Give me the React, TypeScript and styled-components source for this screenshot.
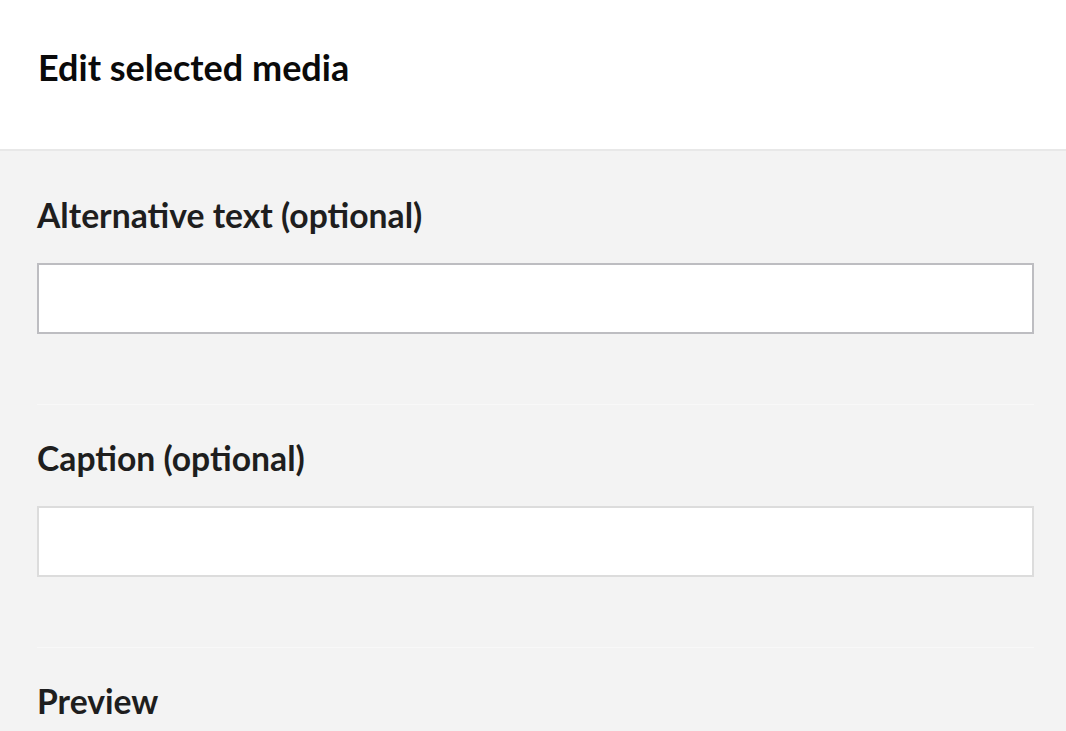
import styled, { createGlobalStyle } from 'styled-components';

const GlobalStyle = createGlobalStyle`
    html, body {
        margin: 0;
        padding: 0;
        background: #f3f3f3;
    }
    body {
        font-family: Lato, 'Noto Sans', sans-serif;
        color: #1e1e1e;
    }
`;

export default function App() {
    return (
        <>
            <GlobalStyle />
            <Page>
                {/* Dialog title */}
                <Header>
                    <Title>Edit selected media</Title>
                </Header>

                {/* Form fields */}
                <Body>
                    <Field $first>
                        <Label htmlFor="alt">Alternative text (optional)</Label>
                        <TextInput id="alt" type="text" $active />
                    </Field>
                    <Field>
                        <Label htmlFor="caption">Caption (optional)</Label>
                        <TextInput id="caption" type="text" />
                    </Field>
                    <Field $last>
                        <Label as="div">Preview</Label>
                    </Field>
                </Body>
            </Page>
        </>
    );
}

const Page = styled.div`
    width: 100%;
    min-height: 731px;
    background: #f3f3f3;
`;

const Header = styled.header`
    box-sizing: border-box;
    height: 151px;
    padding: 46px 38px 0;
    background: #ffffff;
    border-bottom: 2px solid #e8e8e8;
`;

const Title = styled.h1`
    margin: 0;
    font-size: 36px;
    line-height: 1.2;
    font-weight: 700;
    color: #0a0a0a;
`;

const Body = styled.div`
    padding: 0 32px 0 37px;
`;

const Field = styled.div<{ $first?: boolean; $last?: boolean }>`
    display: flex;
    flex-direction: column;
    padding-top: ${(p) => (p.$first ? '44px' : '33px')};
    padding-bottom: ${(p) => (p.$last ? '0' : '69.5px')};
    border-bottom: ${(p) => (p.$last ? 'none' : '1px solid #f8f8f8')};
`;

const Label = styled.label`
    display: block;
    margin: 0 0 27px;
    font-size: 33.7px;
    line-height: 40.8px;
    font-weight: 700;
    color: #1e1e1e;
`;

const TextInput = styled.input<{ $active?: boolean }>`
    box-sizing: border-box;
    width: 100%;
    height: 71.5px;
    margin: 0;
    padding: 0 16px;
    font-family: inherit;
    font-size: 30px;
    background: #ffffff;
    border: 2px solid ${(p) => (p.$active ? '#bdbdc1' : '#dcdcdc')};
    border-radius: 0;
    outline: none;
`;
